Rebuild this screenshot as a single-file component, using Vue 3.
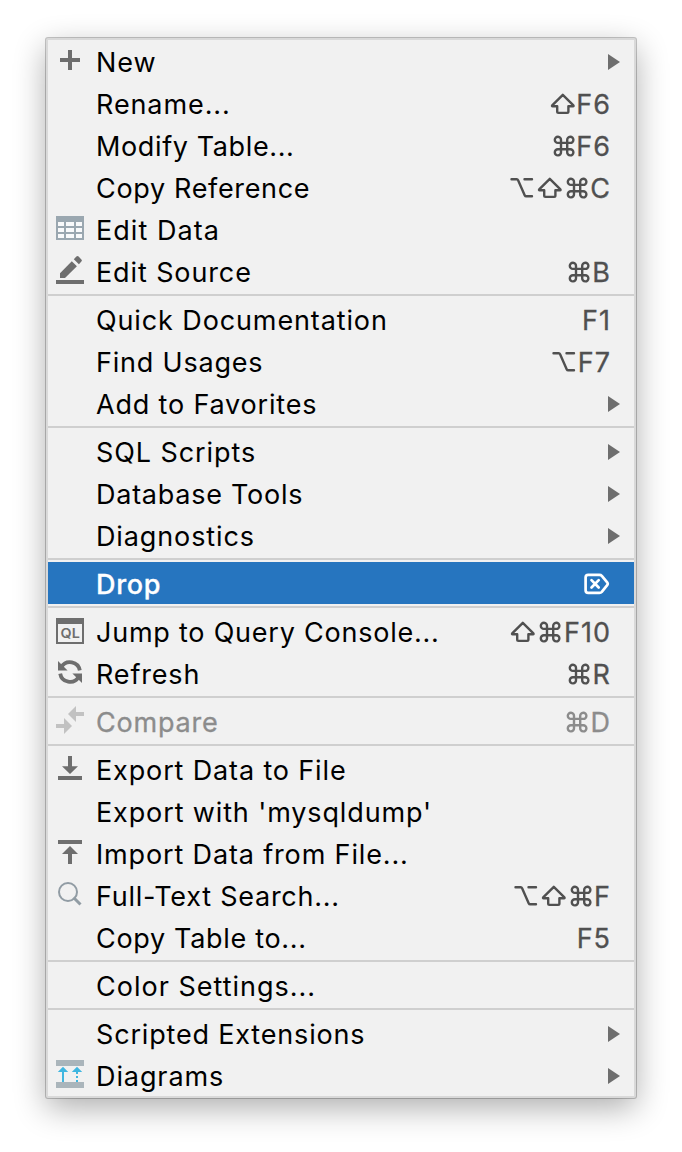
<script setup>
const groups = [
  [
    { icon: 'plus', label: 'New', track: 0.9, sub: true },
    { label: 'Rename...', track: 0.9, mods: ['shift'], key: 'F6', nudge: -1.3 },
    { label: 'Modify Table...', track: 0.62, mods: ['cmd'], key: 'F6', nudge: -1.3 },
    { label: 'Copy Reference', track: 0.66, mods: ['opt', 'shift', 'cmd'], key: 'C', nudge: -0.6 },
    { icon: 'table', label: 'Edit Data', track: 1.05 },
    { icon: 'pencil', label: 'Edit Source', track: 0.88, mods: ['cmd'], key: 'B', nudge: -1 },
  ],
  [
    { label: 'Quick Documentation', track: 0.88, key: 'F1' },
    { label: 'Find Usages', track: 0.8, mods: ['opt'], key: 'F7', nudge: -1 },
    { label: 'Add to Favorites', track: 0.82, sub: true },
  ],
  [
    { label: 'SQL Scripts', track: 0.92, sub: true },
    { label: 'Database Tools', track: 0.74, sub: true },
    { label: 'Diagnostics', track: 0.88, sub: true },
  ],
  [{ label: 'Drop', track: 0.7, active: true, mods: ['del'] }],
  [
    { icon: 'console', label: 'Jump to Query Console...', track: 0.77, mods: ['shift', 'cmd'], key: 'F10' },
    { icon: 'refresh', label: 'Refresh', track: 0.83, mods: ['cmd'], key: 'R' },
  ],
  [{ icon: 'compare', label: 'Compare', track: 0.8, disabled: true, mods: ['cmd'], key: 'D' }],
  [
    { icon: 'export', label: 'Export Data to File', track: 0.86 },
    { label: "Export with 'mysqldump'", track: 0.87 },
    { icon: 'import', label: 'Import Data from File...', track: 0.85 },
    { icon: 'search', label: 'Full-Text Search...', track: 0.75, mods: ['opt', 'shift', 'cmd'], key: 'F', nudge: -1.2 },
    { label: 'Copy Table to...', track: 0.68, key: 'F5' },
  ],
  [{ label: 'Color Settings...', track: 1 }],
  [
    { label: 'Scripted Extensions', track: 0.82, sub: true },
    { icon: 'diagram', label: 'Diagrams', track: 0.9, sub: true },
  ],
]
</script>

<template>
  <main class="stage">
    <div class="menu" role="menu">
      <div v-for="(group, g) in groups" :key="g" class="group">
        <div
          v-for="item in group"
          :key="item.label"
          class="item"
          :class="{ active: item.active, disabled: item.disabled }"
          role="menuitem"
        >
          <svg class="icon" width="28" height="28" viewBox="0 0 28 28">
            <path v-if="item.icon === 'plus'" class="gray" d="M12 4h4v8h8v4h-8v8h-4v-8H4v-4h8z" />
            <g v-else-if="item.icon === 'table'">
              <path class="steel" d="M0 2h28v24H0z" />
              <path class="cell" d="M2 8h6v4H2zM10 8h8v4h-8zM20 8h6v4h-6zM2 14h6v4H2zM10 14h8v4h-8zM20 14h6v4h-6zM2 20h6v4H2zM10 20h8v4h-8zM20 20h6v4h-6z" />
            </g>
            <path v-else-if="item.icon === 'pencil'" class="gray" d="M0 24h28v4H0zM4 17.200 15.800 5.200l5.100 5.100L9 22H4zM17.800 3.200l2.600-2.600q1.100-1 2.200 0l2.800 2.800q1.100 1.100 0 2.200l-2.500 2.600z" />
            <g v-else-if="item.icon === 'console'">
              <path class="gray" fill-rule="evenodd" d="M0 2h28v26H0zM2 8v18h24V8z" />
              <text class="ql" x="4.600" y="21.800" textLength="19.200" lengthAdjust="spacingAndGlyphs">QL</text>
            </g>
            <g v-else-if="item.icon === 'refresh'">
              <g v-for="turn in [0, 180]" :key="turn" :transform="`rotate(${turn} 14 14)`">
                <path class="gray" d="M2 3v9.400h9.600z" />
                <path class="ring" d="M5.400 8.900A10 10 0 0 1 23.800 12.400" />
              </g>
            </g>
            <path v-else-if="item.icon === 'compare'" class="pale" d="M12 8l8-8v6h8v4h-8v6zM16 20l-8-8v6H0v4h8v6z" />
            <path v-else-if="item.icon === 'export'" class="gray" d="M12 2h4v10.200h6L14 20 6 12.200h6zM2 22h24v4H2z" />
            <path v-else-if="item.icon === 'import'" class="gray" d="M2 2h24v4H2zM14 8l8 7.900h-6V26h-4V15.900H6z" />
            <g v-else-if="item.icon === 'search'" class="lens">
              <circle cx="12" cy="12" r="9" stroke-width="2" />
              <path d="M17.500 17.500l7 7" stroke-width="3" />
            </g>
            <g v-else-if="item.icon === 'diagram'">
              <path class="bar" d="M0 0h28v6H0zM0 22h28v6H0z" />
              <path class="sky" d="M7 6.800l5.200 5.200H8v10H6V12H1.800zM21 6.800l5.200 5.200H22v2h-2v-2h-4.200zM20 16h2v2h-2zM20 20h2v2h-2z" />
            </g>
          </svg>
          <span class="label" :style="{ letterSpacing: item.track + 'px' }">{{ item.label }}</span>
          <span class="shortcut">
            <template v-for="mod in item.mods" :key="mod">
              <svg v-if="mod === 'shift'" class="glyph" width="28" height="22" viewBox="0 0 28 22">
                <path d="M12.800 1.800 23.400 12.400q.6.800-.4.800h-4.600v5.400q0 1.300-1.300 1.300H8.500q-1.300 0-1.300-1.300v-5.400H2.600q-1 0-.4-.8z" />
              </svg>
              <svg v-else-if="mod === 'cmd'" class="glyph" width="26" height="22" viewBox="0 0 26 22">
                <path d="M9 7.900V5A3.100 3.100 0 1 0 5.900 7.900H18.200A3.100 3.100 0 1 0 15.200 5V17.100A3.100 3.100 0 1 0 18.200 14.200H5.900A3.100 3.100 0 1 0 9 17.100z" />
              </svg>
              <svg v-else-if="mod === 'opt'" class="glyph" width="27" height="22" viewBox="0 0 27 22">
                <path d="M1.500 2.300h5.200q1 0 1.400.9l6.700 15.200q.4.900 1.400.9h5.800M14.500 2.300h7.500" />
              </svg>
              <svg v-else class="glyph del" width="26" height="22" viewBox="0 0 26 22">
                <path d="M4.200 1.800h11.200q1.500 0 2.400 1l5.400 6.600q1.100 1.400 0 2.800l-5.400 6.600q-.9 1-2.400 1H4.200Q1.600 19.800 1.600 17.200V4.400Q1.600 1.800 4.200 1.800z" />
                <path d="M7.500 7.100l7.200 7.400M14.700 7.100l-7.200 7.400" />
              </svg>
            </template>
            <span v-if="item.key" class="key" :style="{ marginLeft: (item.nudge || 0) + 'px' }">{{ item.key }}</span>
          </span>
          <svg v-if="item.sub" class="arrow" width="12" height="16" viewBox="0 0 12 16">
            <path class="gray" d="M0 0l12 8L0 16z" />
          </svg>
        </div>
      </div>
    </div>
  </main>
</template>

<style>
body { background: #fff; }
</style>

<style scoped>
.stage {
  box-sizing: border-box;
  width: 682px;
  height: 1152px;
  padding: 38px 46px 0;
  overflow: hidden;
}
.menu {
  border: 2px solid #d9d9d9;
  border-radius: 2px;
  background: #f1f1f1;
  box-shadow: 0 0 0 1px rgba(0, 0, 0, 0.22), 0 10px 32px rgba(0, 0, 0, 0.32);
  font-family: Inter, "Liberation Sans", sans-serif;
  font-size: 27px;
  color: #000;
}
.group + .group::before {
  content: "";
  display: block;
  height: 2px;
  border: solid #f1f1f1;
  border-width: 2px 0;
  background: #cfcfcf;
}
.item {
  display: flex;
  align-items: center;
  position: relative;
  height: 42px;
  padding: 0 24px 0 8px;
  box-sizing: border-box;
  line-height: 42px;
}
.icon {
  flex: none;
  margin: -2px 12px 0 0;
  overflow: visible;
}
.label {
  flex: 1;
  white-space: pre;
  padding-top: 3px;
}
.shortcut {
  display: flex;
  align-items: center;
  color: #505050;
}
.key {
  padding-top: 3px;
  letter-spacing: 1px;
  margin-right: -1px;
  -webkit-text-stroke: 0.3px currentColor;
}
.glyph {
  fill: none;
  stroke: currentColor;
  stroke-width: 2.4;
  stroke-linejoin: round;
  stroke-linecap: round;
  margin-top: 2px;
}
.del { stroke-width: 2.7; }
.arrow {
  position: absolute;
  right: 14px;
  top: 14px;
}
.active { background: #2675bf; color: #fff; }
.active .label {
  font-weight: 500;
  -webkit-text-stroke: 0.3px currentColor;
}
.active .shortcut { color: #fff; }
.disabled, .disabled .shortcut { color: #8c8c8c; }
.disabled .label { -webkit-text-stroke: 0.3px currentColor; }
.gray { fill: #6e6e6e; }
.steel { fill: #9aa7b0; }
.cell { fill: #f8f9fa; }
.pale { fill: #c2c2c2; }
.bar { fill: #aab5bb; }
.sky { fill: #40b6e0; }
.ring { fill: none; stroke: #6e6e6e; stroke-width: 3.8; }
.lens { fill: none; stroke: #919ca4; }
.ql {
  fill: #6e6e6e;
  font-size: 13px;
  font-weight: 600;
}
</style>
